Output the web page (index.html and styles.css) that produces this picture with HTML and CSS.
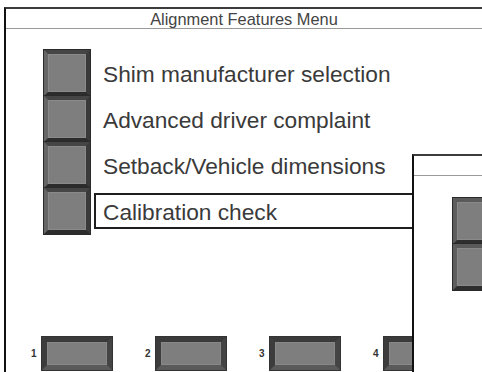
FILE: index.html
```html
<!DOCTYPE html>
<html lang="en">
<head>
    <meta charset="UTF-8">
    <title>Alignment Features Menu</title>
    <link rel="stylesheet" href="styles.css">
</head>
<body>
    <div class="screen">
        <div class="window main">
            <div class="title">Alignment Features Menu</div>
            <div class="menu">
                <div class="menu-row"><div class="key"></div><span class="label">Shim manufacturer selection</span></div>
                <div class="menu-row"><div class="key"></div><span class="label">Advanced driver complaint</span></div>
                <div class="menu-row"><div class="key"></div><span class="label">Setback/Vehicle dimensions</span></div>
                <div class="menu-row"><div class="key"></div><span class="label selected">Calibration check</span></div>
            </div>
            <div class="fkeys">
                <div class="fkey"><span class="num">1</span><div class="fbtn"></div></div>
                <div class="fkey"><span class="num">2</span><div class="fbtn"></div></div>
                <div class="fkey"><span class="num">3</span><div class="fbtn"></div></div>
                <div class="fkey"><span class="num">4</span><div class="fbtn"></div></div>
            </div>
        </div>

        <div class="window popup">
            <div class="title"></div>
            <div class="menu small">
                <div class="menu-row"><div class="key"></div></div>
                <div class="menu-row"><div class="key"></div></div>
            </div>
        </div>
    </div>
</body>
</html>
```

FILE: styles.css
```css
body {
    margin: 0;
    background-color: #fff;
    font-family: "Liberation Sans", Arial, sans-serif;
    color: #3a3a3a;
}
.screen {
    position: relative;
    width: 482px;
    height: 372px;
    overflow: hidden;
}
.window {
    background-color: #fff;
    border-left: 2px solid #111;
    border-top: 2px solid #3c3c3c;
    box-sizing: border-box;
}
.main {
    margin: 7px 0 0 4px;
    height: 365px;
    display: flex;
    flex-direction: column;
}
.title {
    height: 19px;
    line-height: 21px;
    text-align: center;
    font-size: 16.4px;
    color: #444;
    border-bottom: 1px solid #9a9a9a;
}
.menu {
    padding: 21px 0 0 38px;
}
.menu-row {
    display: flex;
    align-items: center;
    height: 46px;
}
.key {
    width: 46px;
    height: 46px;
    flex: none;
    box-sizing: border-box;
    background-color: #7e7e7e;
    border: 4px solid;
    border-color: #454545 #3a3a3a #2c2c2c #666;
    box-shadow: 0 0 0 1px #2a2a2a, inset 0 0 0 1px #8a8a8a;
}
.label {
    margin-left: 13px;
    padding-top: 2px;
    font-size: 22.7px;
    white-space: nowrap;
}
.label.selected {
    flex: 1;
    margin-left: 4px;
    padding: 0 0 0 7px;
    height: 36px;
    line-height: 34px;
    box-sizing: border-box;
    border: 2px solid #1e1e1e;
}
.fkeys {
    margin-top: auto;
    padding: 0 0 2px 25px;
    display: flex;
}
.fkey {
    width: 114px;
    display: flex;
    align-items: center;
    flex: none;
}
.num {
    width: 11px;
    font-size: 10px;
    font-weight: bold;
    color: #333;
}
.fbtn {
    width: 70px;
    height: 33px;
    box-sizing: border-box;
    background-color: #7e7e7e;
    border: 5px solid;
    border-color: #3a3a3a #444 #5a5a5a #3c3c3c;
    box-shadow: 0 0 0 1px #333, inset 0 0 0 1px #888;
}
.popup {
    position: absolute;
    left: 412px;
    top: 154px;
    right: 0;
    bottom: 0;
}
.popup .menu {
    padding: 22px 0 0 39px;
}
.popup .key {
    border-color: #5a5a5a #3e3e3e #2e2e2e #5e5e5e;
}
```
